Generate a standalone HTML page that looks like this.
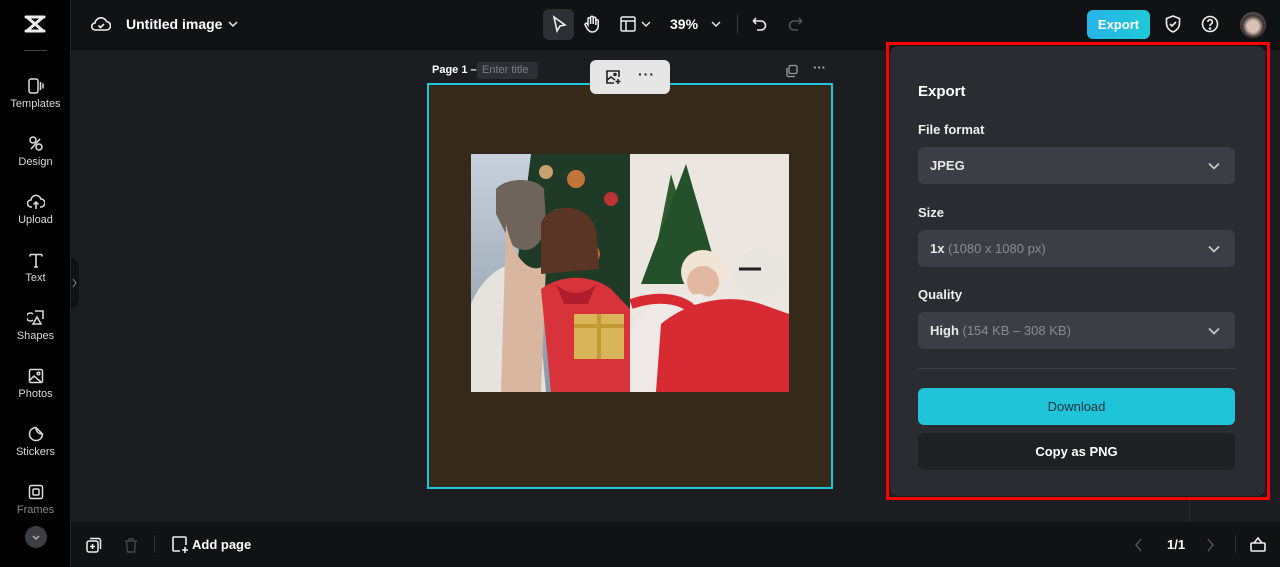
<!DOCTYPE html>
<html><head><meta charset="utf-8"><style>
*{box-sizing:border-box;margin:0;padding:0}
body{width:1280px;height:567px;overflow:hidden;background:#1c1d21;font-family:"Liberation Sans",sans-serif;color:#fff;position:relative}
.abs{position:absolute}
.side{left:0;top:0;width:71px;height:567px;background:#000;border-right:1px solid #1f2023}
.si{position:absolute;left:0;width:71px;text-align:center;font-size:11px;color:#d8d8d8}
.si svg{display:block;margin:0 auto 3px}
.top{left:71px;top:0;width:1209px;height:50px;background:#111214}
.bot{left:71px;top:522px;width:1209px;height:45px;background:#111214}
.panel{left:890px;top:46px;width:375px;height:450px;background:#2b2c31;border-radius:8px}
.sel{position:absolute;left:28px;width:317px;height:37px;background:#3d3e45;border-radius:6px;font-size:13px;font-weight:bold;padding:0 12px;line-height:37px;color:#e8e8e8}
.sel span{color:#8a8b92;font-weight:normal}
.sel svg{position:absolute;right:14px;top:12px}
.lbl{position:absolute;left:28px;font-size:13px;font-weight:bold;color:#eee}
</style></head><body>
<div class="abs side">
 <svg class="abs" style="left:22px;top:13px" width="26" height="22" viewBox="0 0 26 22"><path d="M4 4h18M4 18h18M6 5l14 12M20 5L6 17" stroke="#eee" stroke-width="3" fill="none" stroke-linecap="round"/></svg>
 <div class="abs" style="left:24px;top:50px;width:23px;height:1px;background:#444"></div>
 <div class="si" style="top:77px"><svg width="18" height="18" viewBox="0 0 18 18" fill="none" stroke="#ddd" stroke-width="1.5"><rect x="2" y="2" width="9" height="14" rx="2"/><path d="M13.5 5v8M16 6.5v5"/></svg>Templates</div>
 <div class="si" style="top:135px"><svg width="18" height="18" viewBox="0 0 18 18" fill="none" stroke="#ddd" stroke-width="1.5"><circle cx="6" cy="5" r="3"/><circle cx="12" cy="12" r="3"/><path d="M4 14l9-10"/></svg>Design</div>
 <div class="si" style="top:193px"><svg width="18" height="18" viewBox="0 0 18 18" fill="none" stroke="#ddd" stroke-width="1.5"><path d="M5 14H4a3.5 3.5 0 010-7 5 5 0 019.8-1A3.5 3.5 0 0114 14h-1M9 16V9M6.5 11.5L9 9l2.5 2.5"/></svg>Upload</div>
 <div class="si" style="top:251px"><svg width="18" height="18" viewBox="0 0 18 18" fill="none" stroke="#ddd" stroke-width="1.6"><path d="M3 3.5h12M9 3.5V16M3 3.5v2M15 3.5v2M7 16h4"/></svg>Text</div>
 <div class="si" style="top:309px"><svg width="18" height="18" viewBox="0 0 18 18" fill="none" stroke="#ddd" stroke-width="1.5"><path d="M6 5a4 4 0 100 6M8 2h8v8M10 8l-4 7h8z"/></svg>Shapes</div>
 <div class="si" style="top:367px"><svg width="18" height="18" viewBox="0 0 18 18" fill="none" stroke="#ddd" stroke-width="1.5"><rect x="2.5" y="2.5" width="13" height="13" rx="1.5"/><path d="M3 13l4-4 7 6"/><circle cx="11.5" cy="6.5" r="1.3"/></svg>Photos</div>
 <div class="si" style="top:425px"><svg width="18" height="18" viewBox="0 0 18 18" fill="none" stroke="#ddd" stroke-width="1.5"><path d="M15.5 9A6.5 6.5 0 119 2.5l6.5 6.5zM9 2.5c0 4 2.5 6.5 6.5 6.5"/></svg>Stickers</div>
 <div class="si" style="top:483px;color:#888"><svg width="18" height="18" viewBox="0 0 18 18" fill="none" stroke="#ddd" stroke-width="1.5"><rect x="2.5" y="2.5" width="13" height="13" rx="2"/><rect x="6" y="6" width="6" height="6" rx="1"/></svg>Frames</div>
 <div class="abs" style="left:25px;top:526px;width:22px;height:22px;border-radius:50%;background:#3d3e44"><svg width="22" height="22"><path d="M8 10l3 3 3-3" stroke="#bbb" fill="none" stroke-width="1.3"/></svg></div>
</div>
<div class="abs" style="left:71px;top:258px;width:8px;height:50px;background:#111214;border-radius:0 8px 8px 0"><svg width="8" height="50"><path d="M2 21l3 4-3 4" stroke="#888" fill="none"/></svg></div>

<div class="abs top">
 <svg class="abs" style="left:20px;top:15px" width="20" height="18" viewBox="0 0 20 18" fill="none" stroke="#eee" stroke-width="1.6"><path d="M5 15H4.5a3.5 3.5 0 01-.5-7 6 6 0 0111.5-1.5A4 4 0 0115 15z"/><path d="M7.5 10.5l2 2 3.5-3.5"/></svg>
 <div class="abs" style="left:55px;top:16px;font-size:14px;font-weight:bold">Untitled image</div>
 <svg class="abs" style="left:156px;top:18px" width="12" height="12"><path d="M2 4l4 4 4-4" stroke="#eee" fill="none" stroke-width="1.5"/></svg>
 <div class="abs" style="left:472px;top:9px;width:31px;height:31px;background:#2e2f35;border-radius:6px"></div>
 <svg class="abs" style="left:479px;top:14px" width="18" height="20" viewBox="0 0 18 20" fill="none" stroke="#eee" stroke-width="1.6"><path d="M4 3l11 8-5 1-3 5z"/></svg>
 <svg class="abs" style="left:512px;top:14px" width="18" height="20" viewBox="0 0 18 20" fill="none" stroke="#eee" stroke-width="1.5"><path d="M5 11V5a1.3 1.3 0 012.6 0v5V3.5a1.3 1.3 0 012.6 0V10V4.5a1.3 1.3 0 012.6 0V11V7a1.2 1.2 0 012.4 0v5a6 6 0 01-6 6c-3 0-4.5-2-6-5l-1-2a1.2 1.2 0 012-1.3z"/></svg>
 <svg class="abs" style="left:548px;top:15px" width="18" height="18" viewBox="0 0 18 18" fill="none" stroke="#eee" stroke-width="1.5"><rect x="2" y="2" width="14" height="14" rx="1.5"/><path d="M2 6h14M7 6v10"/></svg>
 <svg class="abs" style="left:569px;top:18px" width="12" height="12"><path d="M2 4l4 4 4-4" stroke="#eee" fill="none" stroke-width="1.4"/></svg>
 <div class="abs" style="left:599px;top:16px;font-size:14px;font-weight:bold">39%</div>
 <svg class="abs" style="left:639px;top:18px" width="12" height="12"><path d="M2 4l4 4 4-4" stroke="#eee" fill="none" stroke-width="1.4"/></svg>
 <div class="abs" style="left:666px;top:15px;width:1px;height:18px;background:#3a3b40"></div>
 <svg class="abs" style="left:680px;top:15px" width="18" height="18" viewBox="0 0 18 18" fill="none" stroke="#eee" stroke-width="1.6"><path d="M5 3L2.5 6 5 9M2.5 6H10a4.5 4.5 0 010 9H6"/></svg>
 <svg class="abs" style="left:715px;top:15px" width="18" height="18" viewBox="0 0 18 18" fill="none" stroke="#555" stroke-width="1.6"><path d="M13 3l2.5 3L13 9M15.5 6H8a4.5 4.5 0 000 9h4"/></svg>
 <div class="abs" style="left:1016px;top:10px;width:63px;height:29px;border-radius:6px;background:linear-gradient(90deg,#27b3ea,#1fc9d6);font-size:13px;font-weight:bold;text-align:center;line-height:29px">Export</div>
 <svg class="abs" style="left:1092px;top:14px" width="20" height="20" viewBox="0 0 20 20" fill="none" stroke="#eee" stroke-width="1.6"><path d="M10 2l6.5 2.5v5c0 4-3 7-6.5 8.5C6.5 16.5 3.5 13.5 3.5 9.5v-5z"/><path d="M7 10l2 2 4-4"/></svg>
 <svg class="abs" style="left:1129px;top:14px" width="20" height="20" viewBox="0 0 20 20" fill="none" stroke="#eee" stroke-width="1.6"><circle cx="10" cy="10" r="7.5"/><path d="M7.8 8a2.3 2.3 0 114 1.5c-1 .7-1.8 1.2-1.8 2.5"/><circle cx="10" cy="14.5" r=".5" fill="#eee"/></svg>
 <div class="abs" style="left:1169px;top:12px;width:26px;height:26px;border-radius:50%;background:radial-gradient(circle at 50% 55%,#d9c2b5 0 30%,#3a3230 55%,#8a8080 100%)"></div>
</div>

<div class="abs" style="left:432px;top:64px;font-size:11px;font-weight:bold">Page 1 –</div>
<div class="abs" style="left:477px;top:62px;width:61px;height:17px;background:#2e2f35;border-radius:3px;font-size:11px;color:#7d7e85;padding:2px 5px">Enter title</div>
<svg class="abs" style="left:785px;top:64px" width="14" height="14" viewBox="0 0 14 14" fill="none" stroke="#999" stroke-width="1.3"><rect x="4" y="1.5" width="8" height="8" rx="1.5"/><path d="M2 4v7a1.5 1.5 0 001.5 1.5H10"/></svg>
<div class="abs" style="left:813px;top:60px;font-size:13px;color:#aaa;font-weight:bold">···</div>

<div class="abs" style="left:427px;top:83px;width:406px;height:406px;background:#35291a;border:2px solid #1fc4d8"></div>
<svg class="abs" style="left:471px;top:154px" width="318" height="238" viewBox="0 0 318 238">
 <defs><linearGradient id="s1" x1="0" y1="0" x2="0" y2="1"><stop offset="0" stop-color="#c8d2dc"/><stop offset="1" stop-color="#8a96a6"/></linearGradient></defs>
 <rect width="159" height="238" fill="url(#s1)"/>
 <path d="M60 0h99v160H40z" fill="#1f3a26"/>
 <circle cx="105" cy="25" r="9" fill="#c2753a"/><circle cx="75" cy="18" r="7" fill="#c9a070"/><circle cx="140" cy="45" r="7" fill="#b33"/><circle cx="120" cy="100" r="9" fill="#c5632a"/>
 <path d="M25 35c10-12 40-12 48 0l2 35c-5 30-25 30-35 20L25 60z" fill="#6e645c"/>
 <path d="M0 150c10-25 30-40 45-40l20 20 10 108H0z" fill="#e6e2de"/>
 <path d="M35 70c10 45 30 50 40 40l-5 128H30z" fill="#d8b6a0"/>
 <path d="M85 55c30 0 40 20 38 45-2 15-20 20-40 10z" fill="#d4a89a"/>
 <path d="M70 70c5-20 45-25 55 5l3 40-58 5z" fill="#5a3424"/>
 <path d="M70 135c20-15 50-15 70 0l19 20v83H80z" fill="#d8333a"/>
 <path d="M85 130c12 12 28 12 40 0l-8 20h-24z" fill="#b01c2a"/>
 <rect x="103" y="160" width="50" height="45" fill="#d9b55a"/><path d="M103 172h50M128 160v45" stroke="#c59a35" stroke-width="4"/>
 <path d="M159 0h159v238H159z" fill="#ece6e0"/>
 <path d="M200 20l30 100-50 0z" fill="#2e5a2e"/><path d="M215 10l35 120h-80z" fill="#24502a"/>
 <circle cx="232" cy="118" r="22" fill="#f0e4d4"/><circle cx="232" cy="128" r="16" fill="#e3b8a2"/>
 <circle cx="290" cy="120" r="26" fill="#e8e4e0"/><path d="M268 115h22" stroke="#222" stroke-width="3"/>
 <path d="M159 180c10-30 40-40 70-40l30 10v88H159z" fill="#eee8e6"/>
 <path d="M190 170c30-25 70-30 100-20l28 10v78H185z" fill="#d82a32"/>
 <path d="M160 150c30-10 55-5 65 10" stroke="#d82a32" stroke-width="10" fill="none"/>
</svg>

<div class="abs" style="left:590px;top:60px;width:80px;height:34px;background:#e6e6e6;border-radius:6px"></div>
<svg class="abs" style="left:604px;top:68px" width="18" height="18" viewBox="0 0 18 18" fill="none" stroke="#222" stroke-width="1.6"><path d="M10 15H3V3h12v6"/><path d="M3 12l4-3 4 3"/><circle cx="11" cy="6.5" r="1"/><path d="M14 11v5M11.5 13.5h5"/></svg>
<div class="abs" style="left:638px;top:66px;font-size:14px;font-weight:bold;color:#222;letter-spacing:1px">···</div>

<div class="abs" style="left:1189px;top:50px;width:1px;height:472px;background:#2a2b30"></div>

<div class="abs" style="left:886px;top:42px;width:384px;height:458px;border:3px solid #f00"></div>
<div class="abs panel">
 <div class="abs" style="left:28px;top:37px;font-size:15px;font-weight:bold">Export</div>
 <div class="lbl" style="top:76px">File format</div>
 <div class="sel" style="top:101px">JPEG<svg width="14" height="14"><path d="M2 4.5l5 5 5-5" stroke="#ccc" fill="none" stroke-width="1.6"/></svg></div>
 <div class="lbl" style="top:159px">Size</div>
 <div class="sel" style="top:184px">1x <span>(1080 x 1080 px)</span><svg width="14" height="14"><path d="M2 4.5l5 5 5-5" stroke="#ccc" fill="none" stroke-width="1.6"/></svg></div>
 <div class="lbl" style="top:241px">Quality</div>
 <div class="sel" style="top:266px">High <span>(154 KB – 308 KB)</span><svg width="14" height="14"><path d="M2 4.5l5 5 5-5" stroke="#ccc" fill="none" stroke-width="1.6"/></svg></div>
 <div class="abs" style="left:28px;top:322px;width:317px;height:1px;background:#3e3f45"></div>
 <div class="abs" style="left:28px;top:342px;width:317px;height:37px;background:#20c4d8;border-radius:6px;color:#14343a;font-size:13px;text-align:center;line-height:37px">Download</div>
 <div class="abs" style="left:28px;top:387px;width:317px;height:37px;background:#1f2024;border-radius:6px;font-size:13px;font-weight:bold;text-align:center;line-height:37px">Copy as PNG</div>
</div>

<div class="abs bot">
 <svg class="abs" style="left:14px;top:14px" width="18" height="18" viewBox="0 0 18 18" fill="none" stroke="#eee" stroke-width="1.5"><rect x="2" y="5" width="11" height="11" rx="2"/><path d="M5 2.5h8.5a2 2 0 012 2V13M7.5 8v5M5 10.5h5"/></svg>
 <svg class="abs" style="left:52px;top:15px" width="16" height="17" viewBox="0 0 16 17" fill="none" stroke="#444" stroke-width="1.4"><path d="M2 4h12M6 4V2h4v2M3.5 4l1 11h7l1-11"/></svg>
 <div class="abs" style="left:83px;top:13px;width:1px;height:18px;background:#333"></div>
 <svg class="abs" style="left:100px;top:13px" width="18" height="19" viewBox="0 0 18 19" fill="none" stroke="#eee" stroke-width="1.6"><path d="M9 16H3a1 1 0 01-1-1V3a1 1 0 011-1h11a1 1 0 011 1v7"/><path d="M14 12v6M11 15h6"/></svg>
 <div class="abs" style="left:121px;top:15px;font-size:13px;font-weight:bold">Add page</div>
 <svg class="abs" style="left:1062px;top:15px" width="12" height="16"><path d="M8 2l-5 6 5 6" stroke="#555" fill="none" stroke-width="1.4"/></svg>
 <div class="abs" style="left:1096px;top:15px;font-size:13px;font-weight:bold">1/1</div>
 <svg class="abs" style="left:1133px;top:15px" width="12" height="16"><path d="M4 2l5 6-5 6" stroke="#555" fill="none" stroke-width="1.4"/></svg>
 <div class="abs" style="left:1164px;top:13px;width:1px;height:18px;background:#333"></div>
 <svg class="abs" style="left:1178px;top:13px" width="18" height="18" viewBox="0 0 18 18" fill="none" stroke="#eee" stroke-width="1.6"><rect x="2" y="8" width="14" height="8" rx="1"/><path d="M5 8l4-5 4 5"/></svg>
</div>
</body></html>
